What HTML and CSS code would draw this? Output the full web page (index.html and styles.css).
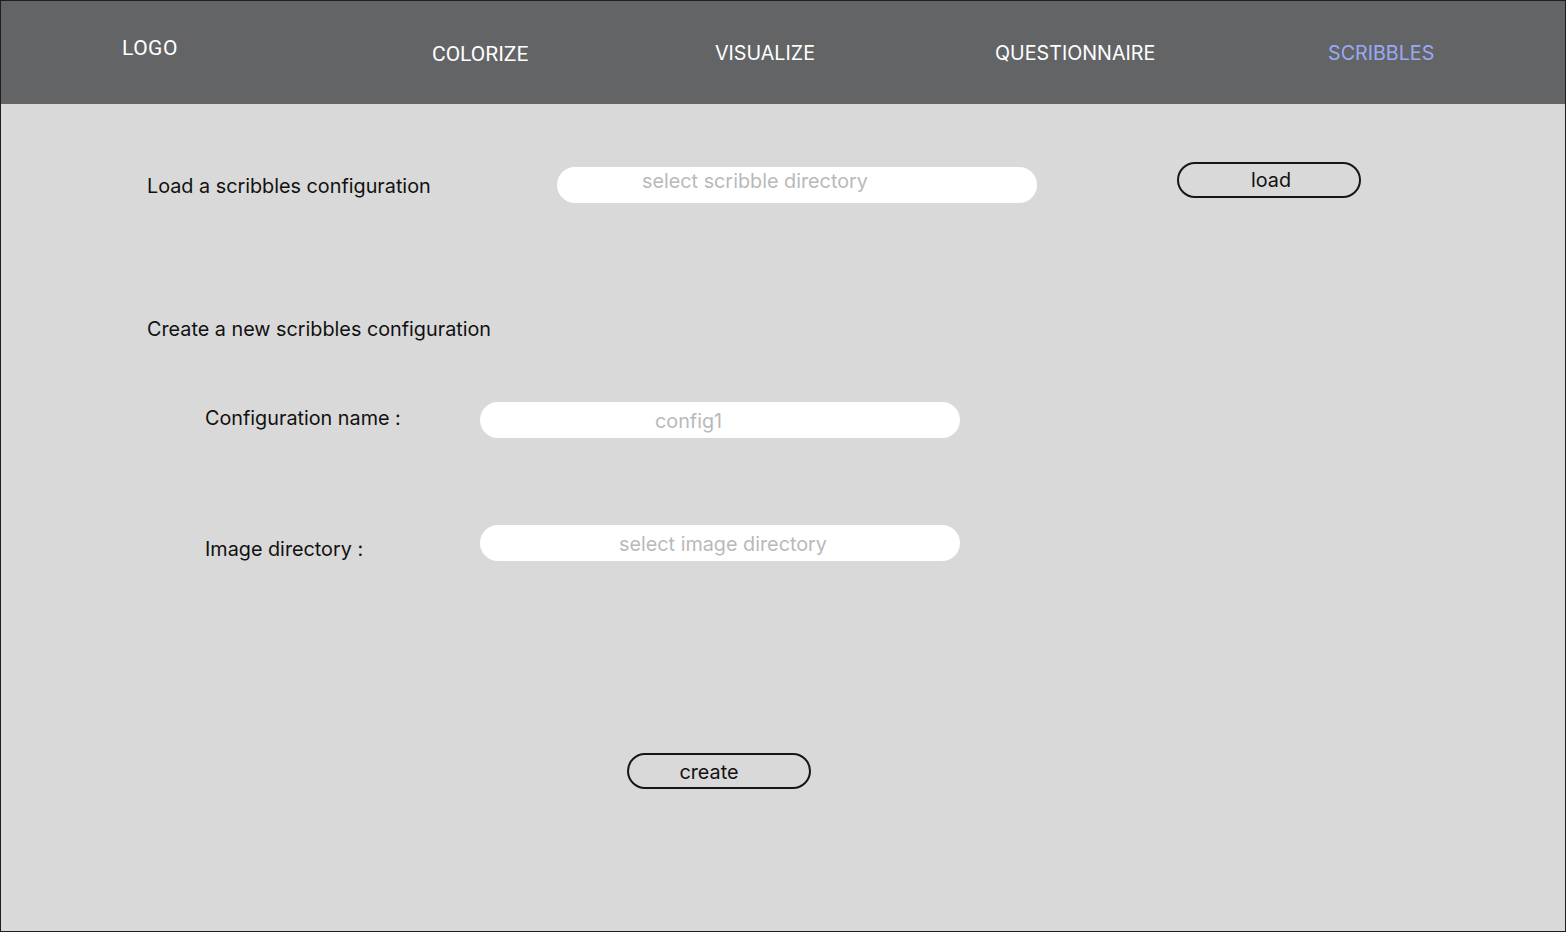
FILE: index.html
```html
<!DOCTYPE html>
<html lang="en">
<head>
<meta charset="utf-8">
<title>Scribbles</title>
<link rel="stylesheet" href="styles.css">
</head>
<body>
<div class="frame">
  <header class="topbar">
    <nav class="nav">
      <span class="nav-item nav-logo">LOGO</span>
      <span class="nav-item nav-roboto">COLORIZE</span>
      <span class="nav-item">VISUALIZE</span>
      <span class="nav-item">QUESTIONNAIRE</span>
      <span class="nav-item nav-active">SCRIBBLES</span>
    </nav>
  </header>
  <main class="content">
    <section class="load-row">
      <span class="label load-label">Load a scribbles configuration</span>
      <div class="field field-load"><span class="placeholder">select scribble directory</span></div>
      <button class="pill-btn load-btn">load</button>
    </section>
    <h2 class="label create-title">Create a new scribbles configuration</h2>
    <section class="form-row row-name">
      <span class="label sub-label name-label">Configuration name :</span>
      <div class="field field-name"><span class="placeholder">config1</span></div>
    </section>
    <section class="form-row row-dir">
      <span class="label sub-label dir-label">Image directory :</span>
      <div class="field field-dir"><span class="placeholder">select image directory</span></div>
    </section>
    <div class="create-row">
      <button class="pill-btn create-btn">create</button>
    </div>
  </main>
</div>
</body>
</html>
```

FILE: styles.css
```css
* { box-sizing: border-box; }
html, body { margin: 0; padding: 0; }
body {
  font-family: "Inter", "Liberation Sans", sans-serif;
  background: #1e1e1e;
}
.frame {
  width: 1566px;
  height: 932px;
  border: 1px solid #1e1e1e;
  background: #d9d9d9;
  display: flex;
  flex-direction: column;
}
.topbar {
  height: 103px;
  background: #636466;
  flex: none;
}
.nav {
  display: grid;
  grid-template-columns: 310px 283px 280px 333px auto;
  padding-left: 121px;
  padding-top: 40px;
  align-items: start;
}
.nav-item {
  font-size: 19.7px;
  line-height: 24px;
  color: #ffffff;
  white-space: nowrap;
}
.nav-logo {
  font-family: "Roboto", "Liberation Sans", sans-serif;
  font-size: 21px;
  letter-spacing: 0.5px;
  margin-top: -5px;
}
.nav-roboto {
  font-family: "Roboto", "Liberation Sans", sans-serif;
  font-size: 21px;
  margin-top: 1px;
}
.nav-active { color: #9aaaf2; }

.content {
  flex: 1;
  display: flex;
  flex-direction: column;
}
.label {
  font-size: 19.8px;
  line-height: 24px;
  color: #111111;
  font-weight: 400;
  margin: 0;
  white-space: nowrap;
}
.load-row {
  display: grid;
  grid-template-columns: 410px 480px 140px 184px;
  grid-template-areas: "lbl fld . btn";
  align-items: start;
  padding-left: 146px;
  margin-top: 58px;
}
.load-label { grid-area: lbl; margin-top: 12px; }
.field-load { grid-area: fld; margin-top: 5px; }
.load-btn { grid-area: btn; }

.field {
  height: 36px;
  border-radius: 18px;
  background: #ffffff;
  display: flex;
  align-items: center;
}
.placeholder {
  font-size: 19.8px;
  line-height: 24px;
  color: #b9b9b9;
  white-space: nowrap;
}
.field-load { padding-left: 85px; padding-bottom: 8px; }
.field-name { padding-left: 175px; padding-top: 2px; }
.field-dir { padding-left: 139px; padding-top: 2px; }

.pill-btn {
  width: 184px;
  height: 36px;
  border: 2px solid #161616;
  border-radius: 18px;
  background: transparent;
  font-family: "Inter", "Liberation Sans", sans-serif;
  font-size: 19.8px;
  line-height: 24px;
  color: #111111;
  padding: 0;
}
.load-btn { padding-left: 4px; }
.create-title {
  margin-top: 114px;
  padding-left: 146px;
}
.form-row {
  display: grid;
  grid-template-columns: 275px 480px;
  align-items: start;
  padding-left: 204px;
}
.row-name { margin-top: 61px; }
.name-label { margin-top: 4px; }
.row-dir { margin-top: 87px; }
.dir-label { margin-top: 12px; }
.create-row {
  padding-left: 626px;
  margin-top: 192px;
}
.create-btn { padding-top: 1px; padding-right: 20px; }
```
